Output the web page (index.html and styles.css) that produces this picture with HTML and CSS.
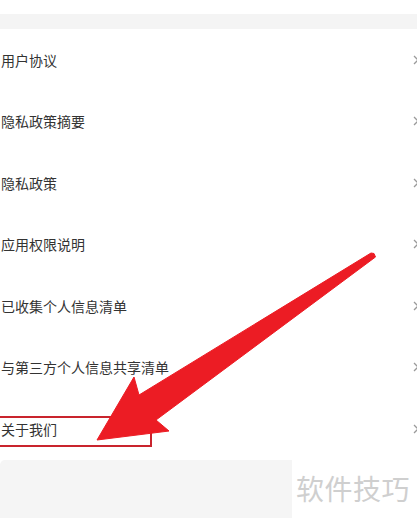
FILE: index.html
```html
<!DOCTYPE html>
<html lang="zh-CN">
<head>
  <meta charset="UTF-8">
  <meta name="viewport" content="width=device-width, initial-scale=1">
  <title>设置 - 关于</title>
  <link rel="stylesheet" href="styles.css">
</head>
<body>

  <div class="page">
    <div class="top"></div>
    <div class="divider"></div>

    <div class="menu">
      <div class="menu-item"><span>用户协议</span><svg class="chev" width="7" height="10" viewBox="0 0 7 10"><polyline points="1,1 5,5 1,9"/></svg></div>
      <div class="menu-item"><span>隐私政策摘要</span><svg class="chev" width="7" height="10" viewBox="0 0 7 10"><polyline points="1,1 5,5 1,9"/></svg></div>
      <div class="menu-item"><span>隐私政策</span><svg class="chev" width="7" height="10" viewBox="0 0 7 10"><polyline points="1,1 5,5 1,9"/></svg></div>
      <div class="menu-item"><span>应用权限说明</span><svg class="chev" width="7" height="10" viewBox="0 0 7 10"><polyline points="1,1 5,5 1,9"/></svg></div>
      <div class="menu-item"><span>已收集个人信息清单</span><svg class="chev" width="7" height="10" viewBox="0 0 7 10"><polyline points="1,1 5,5 1,9"/></svg></div>
      <div class="menu-item"><span>与第三方个人信息共享清单</span><svg class="chev" width="7" height="10" viewBox="0 0 7 10"><polyline points="1,1 5,5 1,9"/></svg></div>
      <div class="menu-item"><span>关于我们</span><svg class="chev" width="7" height="10" viewBox="0 0 7 10"><polyline points="1,1 5,5 1,9"/></svg></div>
    </div>

    <div class="footer">
      <div class="footer-gray"></div>
      <div class="watermark">软件技巧</div>
    </div>

    <!-- annotation: box around the last item + arrow -->
    <div class="mark-box"></div>
    <svg class="arrow" width="417" height="518" viewBox="0 0 417 518">
      <polygon points="97,440 134,377 139,395 371,253 374,253.5 375.5,257 156,420 169,431"/>
    </svg>
  </div>

</body>
</html>
```

FILE: styles.css
```css
body {
  margin: 0;
  font-family: "Noto Sans CJK SC", "Noto Sans", sans-serif;
  background: #ffffff;
  overflow: hidden;
}
.page {
  position: relative;
  width: 417px;
  height: 518px;
  overflow: hidden;
}
.top {
  height: 14px;
  background: #ffffff;
}
.divider {
  height: 15px;
  background: #f4f4f4;
}
.menu {
  background: #ffffff;
  border-radius: 5px;
}
.menu-item {
  height: 61.5px;
  display: flex;
  align-items: center;
  justify-content: space-between;
  padding-left: 1px;
  font-size: 14px;
  color: #333333;
}
.chev {
  margin-right: -3px;
  fill: none;
  stroke: #9a9a9a;
  stroke-width: 1.3;
}
.footer {
  display: flex;
  height: 59px;
}
.footer-gray {
  width: 292px;
  background: #f5f5f5;
  border-top-left-radius: 5px;
}
.watermark {
  flex: 1;
  padding: 10px 0 0 4px;
  font-size: 28px;
  line-height: 36px;
  color: #cfcfcf;
  letter-spacing: 0.5px;
}
.mark-box {
  position: absolute;
  left: -4px;
  top: 416px;
  width: 152px;
  height: 27px;
  border: 2px solid #c9242d;
}
.arrow {
  position: absolute;
  left: 0;
  top: 0;
}
.arrow polygon {
  fill: #ec1c24;
  stroke: #ec1c24;
  stroke-width: 1;
  stroke-linejoin: round;
}
```
